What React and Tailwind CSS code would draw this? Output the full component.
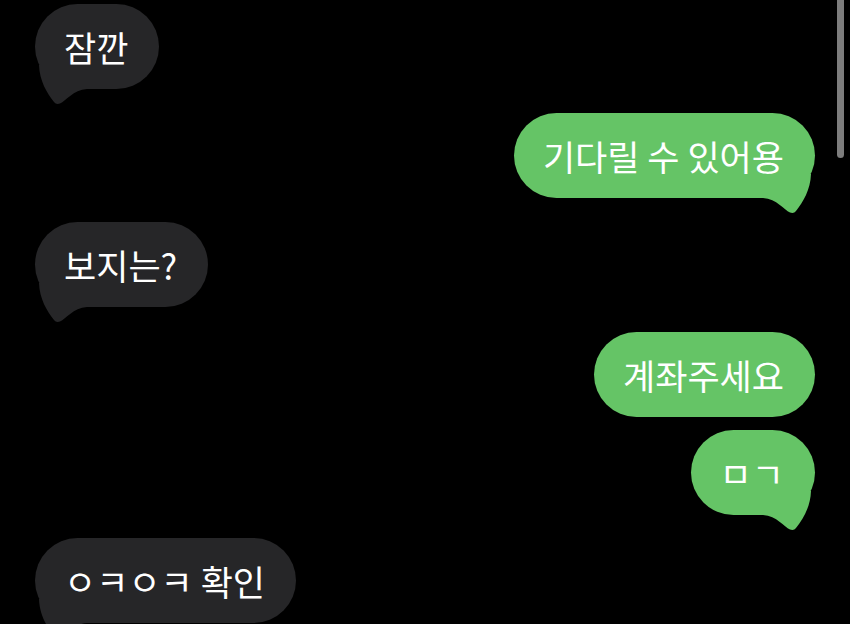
const messages = [
  { text: '잠깐', me: false, tail: true, mt: 'mt-[4px]' },
  { text: '기다릴 수 있어용', me: true, tail: true, mt: 'mt-[24px]' },
  { text: '보지는?', me: false, tail: true, mt: 'mt-[24px]' },
  { text: '계좌주세요', me: true, tail: false, mt: 'mt-[25px]' },
  { text: 'ㅁㄱ', me: true, tail: true, mt: 'mt-[13px]' },
  { text: 'ㅇㅋㅇㅋ 확인', me: false, tail: true, mt: 'mt-[23px]' },
]

const Tail = ({ me }) => (
  <svg
    width="52"
    height="40"
    viewBox="0 0 52 40"
    className={
      me
        ? 'absolute right-0 bottom-[-16px] -scale-x-100 fill-[#65c466]'
        : 'absolute left-0 bottom-[-16px] fill-[#262628]'
    }
  >
    <path d="M4 0 C4.5 16 12 28 19 37 C20.5 39 22.5 39.5 25 38.5 C31 36 38 25 52 24 L52 0 Z" />
  </svg>
)

const Bubble = ({ msg }) => (
  <div className={`flex ${msg.me ? 'justify-end' : 'justify-start'} ${msg.mt}`}>
    <div
      className={`relative h-[85px] flex items-center pl-[29px] pr-[31px] rounded-full text-white text-[35px] leading-none ${
        msg.me ? 'bg-[#65c466]' : 'bg-[#262628]'
      }`}
    >
      {msg.tail && <Tail me={msg.me} />}
      <span className="relative whitespace-pre">{msg.text}</span>
    </div>
  </div>
)

export default function App() {
  return (
    <div className="relative w-[850px] h-[624px] overflow-hidden bg-black font-['Noto_Sans_CJK_KR','Noto_Sans',sans-serif]">
      <div className="flex flex-col pl-[35px] pr-[35px]">
        {messages.map((msg, i) => (
          <Bubble key={i} msg={msg} />
        ))}
      </div>
      {/* scroll indicator */}
      <div className="absolute right-[6px] top-0 w-[7px] h-[158px] rounded-b-full bg-[#7d7d7d]" />
    </div>
  )
}
